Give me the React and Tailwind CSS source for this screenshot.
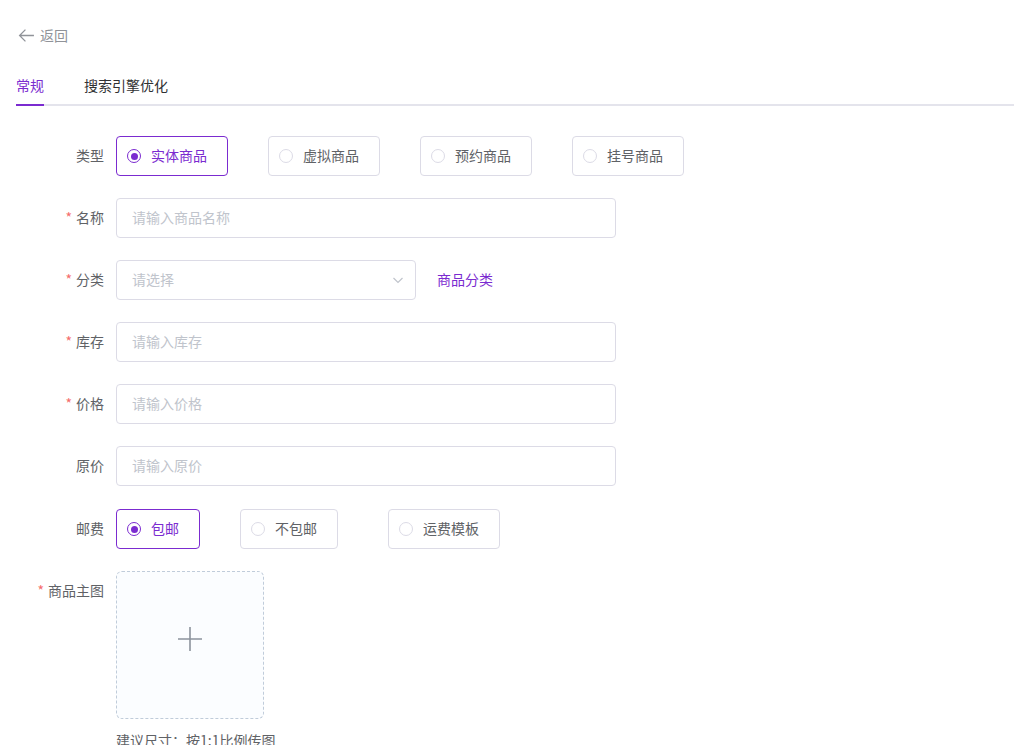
import React, { useState } from 'react'

const PURPLE = '#7b2bd0'

const Label = ({ required, children }) => (
    <div className="w-[100px] shrink-0 pr-3 text-right text-sm leading-[38px] text-[#606266]">
        {required && <span className="mr-1 text-[#f56c6c]">*</span>}
        {children}
    </div>
)

const Radio = ({ label, checked, onClick, className = '' }) => (
    <button
        type="button"
        onClick={onClick}
        className={`flex h-10 items-center gap-[10px] rounded border pb-[2px] pl-[10px] pr-5 text-sm ${checked ? 'border-[#7b2bd0] text-[#7b2bd0]' : 'border-[#dcdbe6] text-[#606266]'} ${className}`}
    >
        <span className={`mt-[2px] flex h-[14px] w-[14px] items-center justify-center rounded-full border ${checked ? 'border-[#7b2bd0]' : 'border-[#dcdbe6]'}`}>
            {checked && <span className="h-[7px] w-[7px] rounded-full bg-[#7b2bd0]" />}
        </span>
        <span>{label}</span>
    </button>
)

const Input = ({ placeholder, className = 'w-[500px]' }) => (
    <input
        placeholder={placeholder}
        className={`h-10 rounded border border-[#dcdbe6] px-[15px] pb-[2px] text-sm text-[#606266] outline-none placeholder:text-[#c0c4cc] ${className}`}
    />
)

const Row = ({ children }) => (
    <div className="mb-[22px] flex items-start">
        {children}
    </div>
)

export default function App() {
    const [tab, setTab] = useState(0)
    const [type, setType] = useState(0)
    const [postage, setPostage] = useState(0)

    const types = ['实体商品', '虚拟商品', '预约商品', '挂号商品']

    return (
        <div className="min-h-[745px] bg-white pl-4 pt-[25px] font-['Noto_Sans_CJK_SC',sans-serif]">
            <div className="flex h-5 items-center gap-[5px] pl-[2px] text-sm text-[#909399]">
                <svg width="17" height="17" viewBox="0 0 16 16" fill="none" stroke="#909399" strokeWidth="1.2">
                    <path d="M15 8H1.5M7 2.5L1.5 8 7 13.5" />
                </svg>
                <span>返回</span>
            </div>

            <div className="mt-[21px] flex border-b-2 border-[#e4e4ec]">
                {['常规', '搜索引擎优化'].map((t, i) => (
                    <div
                        key={t}
                        onClick={() => setTab(i)}
                        className={`-mb-[2px] mr-10 h-10 cursor-pointer border-b-2 text-sm leading-[38px] ${tab === i ? 'border-[#7b2bd0] text-[#7b2bd0]' : 'border-transparent text-[#303133]'}`}
                    >
                        {t}
                    </div>
                ))}
            </div>

            <div className="mt-[30px]">
                <Row>
                    <Label>类型</Label>
                    <div className="flex">
                        {types.map((t, i) => (
                            <Radio key={t} label={t} checked={type === i} onClick={() => setType(i)} className={i > 0 ? 'ml-10' : ''} />
                        ))}
                    </div>
                </Row>

                <Row>
                    <Label required>名称</Label>
                    <Input placeholder="请输入商品名称" />
                </Row>

                <Row>
                    <Label required>分类</Label>
                    <div className="relative flex h-10 w-[300px] items-center rounded border border-[#dcdbe6] px-[15px] pb-[2px] text-sm text-[#c0c4cc]">
                        请选择
                        <svg className="absolute right-[10px] top-[12px]" width="14" height="14" viewBox="0 0 14 14" fill="none" stroke="#c0c4cc" strokeWidth="1.2">
                            <path d="M2.5 5l4.5 4.5L11.5 5" />
                        </svg>
                    </div>
                    <span className="ml-[21px] text-sm leading-[38px]" style={{ color: PURPLE }}>商品分类</span>
                </Row>

                <Row>
                    <Label required>库存</Label>
                    <Input placeholder="请输入库存" />
                </Row>

                <Row>
                    <Label required>价格</Label>
                    <Input placeholder="请输入价格" />
                </Row>

                <Row>
                    <Label>原价</Label>
                    <Input placeholder="请输入原价" />
                </Row>

                <div className="mb-[22px] mt-[23px] flex items-start">
                    <Label>邮费</Label>
                    <div className="flex">
                        <Radio label="包邮" checked={postage === 0} onClick={() => setPostage(0)} />
                        <Radio label="不包邮" checked={postage === 1} onClick={() => setPostage(1)} className="ml-10" />
                        <Radio label="运费模板" checked={postage === 2} onClick={() => setPostage(2)} className="ml-[50px]" />
                    </div>
                </div>

                <Row>
                    <Label required>商品主图</Label>
                    <div>
                        <div className="flex h-[148px] w-[148px] items-center justify-center rounded-md border border-dashed border-[#c0ccda] bg-[#fbfdff]">
                            <svg className="mb-3" width="26" height="26" viewBox="0 0 26 26" fill="none" stroke="#8c939d" strokeWidth="1.6">
                                <path d="M13 1v24M1 13h24" />
                            </svg>
                        </div>
                        <div className="mt-[11px] text-sm text-[#606266]">建议尺寸：按1:1比例传图</div>
                    </div>
                </Row>
            </div>
        </div>
    )
}
